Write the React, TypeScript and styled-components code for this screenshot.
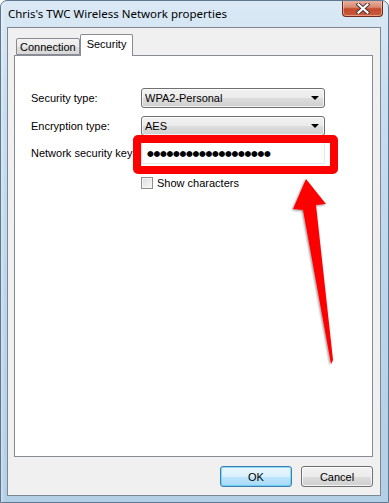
import React from "react"
import styled, { createGlobalStyle } from "styled-components"

const GlobalStyle = createGlobalStyle`
  html, body { margin: 0; padding: 0; background: #ffffff; }
  * { box-sizing: border-box; }
`

const uiFont = `"Liberation Sans", Arial, sans-serif`

const Window = styled.div`
  position: relative;
  width: 389px;
  height: 503px;
  display: flex;
  flex-direction: column;
  padding: 0 7px 6px 6px;
  border: 1px solid #5f7892;
  border-radius: 7px 7px 0 0;
  background:
    linear-gradient(90deg, rgba(255,255,255,0.35) 0px, rgba(255,255,255,0) 4px),
    linear-gradient(180deg, #dbe9f5 0%, #c9deef 18%, #bcd5ea 60%, #b3cfe6 100%);
  font-family: ${uiFont};
  font-size: 11px;
  color: #000;
  overflow: hidden;
`

const TitleBar = styled.div`
  height: 26px;
  display: flex;
  justify-content: space-between;
  align-items: flex-start;
`

const Title = styled.div`
  padding: 5px 0 0 1px;
  font-family: "Noto Sans", "Open Sans", sans-serif;
  font-size: 11.5px;
  color: #000;
  white-space: nowrap;
`

const CloseButton = styled.div`
  width: 41px;
  height: 17px;
  margin: -1px -2px 0 0;
  display: flex;
  align-items: center;
  justify-content: center;
  border: 1px solid #6b2a1c;
  border-top: none;
  border-radius: 0 0 4px 4px;
  background: linear-gradient(180deg, #e9b4a4 0%, #d98a72 45%, #c24a2e 55%, #cc5a3a 100%);
  box-shadow: inset 0 0 0 1px rgba(255, 220, 200, 0.5);
`

const Client = styled.div`
  flex: 1;
  display: flex;
  flex-direction: column;
  padding: 6px 7px 8px 6px;
  background: #f0f0f0;
  border: 1px solid #7d8895;
`

const TabStrip = styled.div`
  height: 21px;
  display: flex;
  align-items: flex-end;
  padding-left: 2px;
`

const Tab = styled.div<{ $active?: boolean }>`
  position: relative;
  z-index: ${p => (p.$active ? 2 : 1)};
  height: ${p => (p.$active ? "22px" : "17px")};
  margin-bottom: ${p => (p.$active ? "-1px" : "0")};
  padding: ${p => (p.$active ? "3px 6px 0 6px" : "2px 3px 0 3px")};
  display: flex;
  align-items: flex-start;
  border: 1px solid #898c95;
  border-bottom: ${p => (p.$active ? "none" : "1px solid #898c95")};
  border-radius: 2px 2px 0 0;
  background: ${p =>
    p.$active
      ? "#ffffff"
      : "linear-gradient(180deg, #f3f3f3 0%, #ebebeb 50%, #dddddd 51%, #d8d8d8 100%)"};
  white-space: nowrap;
`

const Panel = styled.div`
  flex: 1;
  display: flex;
  flex-direction: column;
  padding: 32px 0 0 16px;
  background: #ffffff;
  border: 1px solid #898c95;
`

const Row = styled.div<{ $gap: number }>`
  display: grid;
  grid-template-columns: 110px 184px;
  align-items: center;
  margin-bottom: ${p => p.$gap}px;
`

const Label = styled.div`
  white-space: nowrap;
`

const Combo = styled.div`
  height: 20px;
  display: flex;
  align-items: center;
  justify-content: space-between;
  padding: 0 4px 0 3px;
  border: 1px solid #707070;
  border-radius: 3px;
  background: linear-gradient(180deg, #f2f2f2 0%, #ebebeb 50%, #dddddd 51%, #cfcfcf 100%);
  box-shadow: inset 0 0 0 1px rgba(255, 255, 255, 0.7);
`

const ComboArrow = styled.span`
  width: 0;
  height: 0;
  margin-right: 1px;
  border-left: 4px solid transparent;
  border-right: 4px solid transparent;
  border-top: 4px solid #000;
`

const FieldWrap = styled.div`
  position: relative;
  height: 22px;
`

const Field = styled.div`
  height: 22px;
  display: flex;
  align-items: center;
  padding-left: 5px;
  border: 1px solid #e3e9ef;
  border-top-color: #abadb3;
  border-left-color: #dbdfe6;
  background: #ffffff;
  font-family: "DejaVu Sans", sans-serif;
  font-size: 7.8px;
  letter-spacing: -0.3px;
  overflow: hidden;
  white-space: nowrap;
`

const Highlight = styled.div`
  position: absolute;
  top: -7px;
  left: -8px;
  right: -13px;
  bottom: -10px;
  border: 8px solid #ff0000;
  border-radius: 5px;
  pointer-events: none;
`

const CheckRow = styled.div`
  display: flex;
  align-items: center;
  gap: 4px;
  margin-left: 110px;
`

const CheckBox = styled.span`
  width: 12px;
  height: 12px;
  border: 1px solid #8f8f8f;
  background: linear-gradient(135deg, #dcdcdc 0%, #f0f0f0 70%, #fafafa 100%);
  box-shadow: inset 0 0 0 1px #f4f4f4;
`

const ButtonBar = styled.div`
  display: flex;
  justify-content: flex-end;
  gap: 9px;
  padding-top: 9px;
`

const Button = styled.div<{ $default?: boolean }>`
  width: 72px;
  height: 21px;
  display: flex;
  align-items: center;
  justify-content: center;
  border: 1px solid ${p => (p.$default ? "#3c7fb1" : "#707070")};
  border-radius: 3px;
  background: ${p =>
    p.$default
      ? "linear-gradient(180deg, #eaf6fd 0%, #d9f0fc 50%, #bee6fd 51%, #a7d9f5 100%)"
      : "linear-gradient(180deg, #f2f2f2 0%, #ebebeb 50%, #dddddd 51%, #cfcfcf 100%)"};
  box-shadow: inset 0 0 0 1px ${p => (p.$default ? "rgba(72, 200, 240, 0.6)" : "rgba(255,255,255,0.75)")};
`

const Annotation = styled.svg`
  position: absolute;
  left: 0;
  top: 0;
  width: 389px;
  height: 503px;
  pointer-events: none;
`

export default function App() {
  return (
    <>
      <GlobalStyle />
      <Window>
        <TitleBar>
          <Title>Chris's TWC Wireless Network properties</Title>
          <CloseButton>
            <svg width="14" height="11" viewBox="0 0 14 11">
              <path d="M2.5 1.5 L11.5 9.5 M11.5 1.5 L2.5 9.5" stroke="#4b3230" strokeWidth="4" strokeLinecap="square" />
              <path d="M2.5 1.5 L11.5 9.5 M11.5 1.5 L2.5 9.5" stroke="#ffffff" strokeWidth="2.2" strokeLinecap="square" />
            </svg>
          </CloseButton>
        </TitleBar>
        <Client>
          <TabStrip>
            <Tab>Connection</Tab>
            <Tab $active>Security</Tab>
          </TabStrip>
          <Panel>
            <Row $gap={8}>
              <Label>Security type:</Label>
              <Combo>
                WPA2-Personal
                <ComboArrow />
              </Combo>
            </Row>
            <Row $gap={6}>
              <Label>Encryption type:</Label>
              <Combo>
                AES
                <ComboArrow />
              </Combo>
            </Row>
            <Row $gap={13}>
              <Label>Network security key</Label>
              <FieldWrap>
                <Field>●●●●●●●●●●●●●●●●●●●</Field>
                <Highlight />
              </FieldWrap>
            </Row>
            <CheckRow>
              <CheckBox />
              Show characters
            </CheckRow>
          </Panel>
          <ButtonBar>
            <Button $default>OK</Button>
            <Button>Cancel</Button>
          </ButtonBar>
        </Client>
        <Annotation viewBox="0 0 389 503">
          <defs>
            <filter id="arrowShadow" x="-20%" y="-20%" width="140%" height="140%">
              <feDropShadow dx="-1" dy="1" stdDeviation="1" floodColor="#000" floodOpacity="0.45" />
            </filter>
          </defs>
          <polygon
            points="305,178 325,203 315,204 332,359 330,363 302,209 292,208"
            fill="#ff0000"
            filter="url(#arrowShadow)"
          />
        </Annotation>
      </Window>
    </>
  )
}
